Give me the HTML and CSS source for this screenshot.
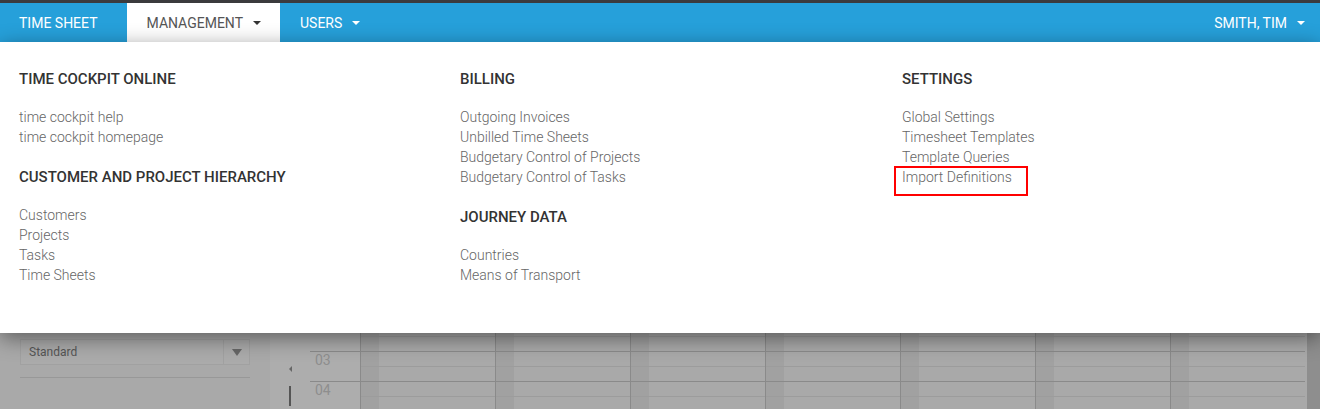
FILE: index.html
```html
<!DOCTYPE html>
<html>
<head>
<meta charset="utf-8">
<link rel="stylesheet" href="styles.css">
</head>
<body>
<div class="topline"></div>
<nav class="navbar">
  <div class="nav-left">
    <a class="nav-item first">TIME SHEET</a>
    <a class="nav-item active">MANAGEMENT <span class="caret"></span></a>
    <a class="nav-item">USERS <span class="caret"></span></a>
  </div>
  <div class="nav-right">
    <a class="nav-item user">SMITH, TIM <span class="caret"></span></a>
  </div>
</nav>
<main class="page">
  <aside class="sidebar">
    <div class="select">
      <span class="select-text">Standard</span>
      <span class="select-btn"><span class="tri"></span></span>
    </div>
    <div class="divider"></div>
  </aside>
  <section class="calendar">
    <div class="cal-row">
      <div class="nav-cell"></div>
      <div class="hour-cell"></div>
      <div class="day-cell"></div><div class="day-cell"></div><div class="day-cell"></div><div class="day-cell"></div><div class="day-cell"></div><div class="day-cell"></div><div class="day-cell"></div>
    </div>
    <div class="cal-row">
      <div class="nav-cell"><span class="arrow-left"></span></div>
      <div class="hour-cell">03</div>
      <div class="day-cell"></div><div class="day-cell"></div><div class="day-cell"></div><div class="day-cell"></div><div class="day-cell"></div><div class="day-cell"></div><div class="day-cell"></div>
    </div>
    <div class="cal-row">
      <div class="nav-cell"><span class="bar"></span></div>
      <div class="hour-cell">04</div>
      <div class="day-cell"></div><div class="day-cell"></div><div class="day-cell"></div><div class="day-cell"></div><div class="day-cell"></div><div class="day-cell"></div><div class="day-cell"></div>
    </div>
  </section>
  <div class="scrollbar"></div>

  <div class="dropdown">
    <div class="dcol">
      <h3>TIME COCKPIT ONLINE</h3>
      <ul>
        <li>time cockpit help</li>
        <li>time cockpit homepage</li>
      </ul>
      <h3>CUSTOMER AND PROJECT HIERARCHY</h3>
      <ul>
        <li>Customers</li>
        <li>Projects</li>
        <li>Tasks</li>
        <li>Time Sheets</li>
      </ul>
    </div>
    <div class="dcol">
      <h3>BILLING</h3>
      <ul>
        <li>Outgoing Invoices</li>
        <li>Unbilled Time Sheets</li>
        <li>Budgetary Control of Projects</li>
        <li>Budgetary Control of Tasks</li>
      </ul>
      <h3>JOURNEY DATA</h3>
      <ul>
        <li>Countries</li>
        <li>Means of Transport</li>
      </ul>
    </div>
    <div class="dcol">
      <h3>SETTINGS</h3>
      <ul>
        <li>Global Settings</li>
        <li>Timesheet Templates</li>
        <li>Template Queries</li>
        <li><span class="highlight">Import Definitions</span></li>
      </ul>
    </div>
  </div>
</main>
</body>
</html>
```
FILE: styles.css
```css
* { box-sizing: border-box; }
html, body { margin: 0; padding: 0; }
body {
  font-family: Roboto, "Liberation Sans", Arial, sans-serif;
  font-size: 14px;
  background: #a9a9a9;
  width: 1320px;
  height: 409px;
  overflow: hidden;
}
.topline { height: 3px; background: #3b3b3d; }
.navbar {
  height: 39px;
  background: #26a0da;
  display: flex;
  justify-content: space-between;
}
.nav-left, .nav-right { display: flex; }
.nav-item {
  display: flex;
  align-items: center;
  color: #fff;
  padding: 0 19px 0 20px;
  font-size: 14px;
  height: 39px;
}
.nav-item.first { padding: 0 29px 0 19px; }
.nav-item.active {
  background: #fff;
  color: #555;
}
.nav-item.user { padding: 0 15px 0 20px; }
.caret {
  display: inline-block;
  width: 0; height: 0;
  border-left: 4px solid transparent;
  border-right: 4px solid transparent;
  border-top: 4px solid currentColor;
  margin-left: 10px;
  margin-top: 1px;
}
.nav-item.active .caret { border-top-color: #333; }

.page {
  position: relative;
  display: flex;
  height: 367px;
}
.sidebar {
  width: 270px;
  padding: 297px 20px 0 20px;
  background: #a9a9a9;
}
.select {
  display: flex;
  height: 26px;
  border: 1px solid #a1a1a1;
  background: #ababab;
}
.select-text {
  flex: 1;
  font-size: 12px;
  color: #555;
  padding: 5px 0 0 8px;
}
.select-btn {
  width: 26px;
  border-left: 1px solid #a1a1a1;
  display: flex;
  align-items: center;
  justify-content: center;
}
.tri {
  width: 0; height: 0;
  border-left: 5px solid transparent;
  border-right: 5px solid transparent;
  border-top: 7px solid #666;
}
.divider { height: 1px; background: #989898; margin-top: 12px; }

.calendar {
  width: 1035px;
  padding-top: 279px;
  background: #adadad;
}
.cal-row {
  display: flex;
  height: 30px;
}
.nav-cell {
  width: 40px;
  display: flex;
  flex-direction: column;
  align-items: center;
}
.arrow-left {
  width: 0; height: 0;
  margin-top: 15px;
  border-top: 3px solid transparent;
  border-bottom: 3px solid transparent;
  border-right: 3px solid #666;
}
.bar { width: 2px; height: 20px; background: #555; margin-top: 5px; }
.hour-cell {
  width: 50px;
  border-top: 1px solid #8a8a8a;
  color: #8e8e8e;
  font-size: 14px;
  line-height: 14px;
  padding: 1px 0 0 5px;
}
.day-cell {
  width: 135px;
  border-top: 1px solid #8a8a8a;
  border-left: 1px solid #8a8a8a;
  background:
    linear-gradient(to bottom, transparent 14px, #9c9c9c 14px, #9c9c9c 15px, transparent 15px),
    linear-gradient(to right, #a1a1a1 18px, #a9a9a9 18px);
}
.scrollbar {
  width: 15px;
  border-left: 2px solid #a9a9a9;
  background: #8e8e8e;
}

.dropdown {
  position: absolute;
  left: 0; top: 0;
  width: 1320px;
  height: 291px;
  background: #fff;
  box-shadow: 0 5px 20px rgba(0,0,0,0.45);
  display: grid;
  grid-template-columns: 441px 442px 1fr;
  padding: 26px 0 0 19px;
}
.dcol h3 {
  margin: 0;
  padding-top: 1px;
  font-size: 15px;
  font-weight: 500;
  color: #333;
  line-height: 20px;
}
.dcol ul {
  list-style: none;
  margin: 18px 0 19px 0;
  padding: 0;
}
.dcol li {
  line-height: 20px;
  color: #666;
  font-weight: 300;
}
.highlight {
  position: relative;
  display: inline-block;
}
.highlight::after {
  content: "";
  position: absolute;
  left: -8px; top: -1px; right: -16px; bottom: -9px;
  border: 2px solid #ff0000;
}
```
